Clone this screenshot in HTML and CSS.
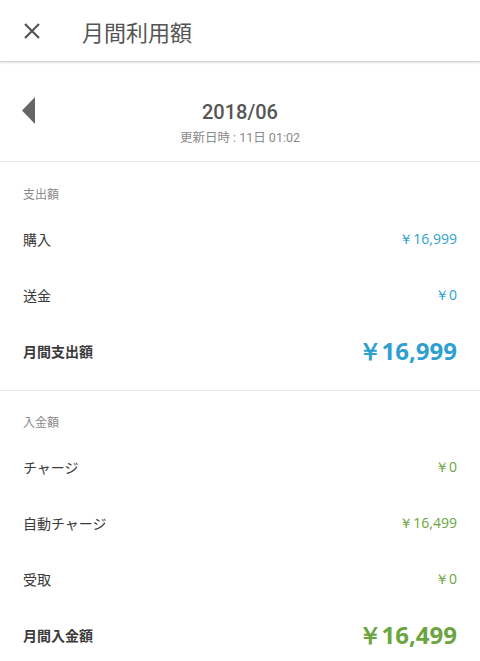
FILE: index.html
```html
<!DOCTYPE html>
<html lang="ja">
<head>
    <meta charset="UTF-8">
    <meta name="viewport" content="width=device-width, initial-scale=1.0">
    <title>月間利用額</title>
    <link rel="stylesheet" href="styles.css">
</head>
<body>
    <div class="header">
        <span class="close">
            <svg width="18" height="18" viewBox="0 0 18 18">
                <path d="M2 2 L16 16 M16 2 L2 16" stroke="#555" stroke-width="2.2" fill="none"/>
            </svg>
        </span>
        <span class="title">月間利用額</span>
    </div>

    <div class="month">
        <span class="prev">
            <svg width="14" height="27" viewBox="0 0 14 27">
                <polygon points="13,0 13,27 0,13.5" fill="#666"/>
            </svg>
        </span>
        <div class="month-text">
            <div class="month-name">2018/06</div>
            <div class="updated">更新日時 : 11日 01:02</div>
        </div>
    </div>

    <!-- 支出 -->
    <div class="section spend">
        <div class="section-label">支出額</div>
        <div class="row">
            <span class="label">購入</span>
            <span class="value">￥16,999</span>
        </div>
        <div class="row">
            <span class="label">送金</span>
            <span class="value">￥0</span>
        </div>
        <div class="row total">
            <span class="label">月間支出額</span>
            <span class="value">￥16,999</span>
        </div>
    </div>

    <!-- 入金 -->
    <div class="section income">
        <div class="section-label">入金額</div>
        <div class="row">
            <span class="label">チャージ</span>
            <span class="value">￥0</span>
        </div>
        <div class="row">
            <span class="label">自動チャージ</span>
            <span class="value">￥16,499</span>
        </div>
        <div class="row">
            <span class="label">受取</span>
            <span class="value">￥0</span>
        </div>
        <div class="row total">
            <span class="label">月間入金額</span>
            <span class="value">￥16,499</span>
        </div>
    </div>
</body>
</html>
```

FILE: styles.css
```css
body {
    margin: 0;
    padding: 0;
    font-family: Roboto, "Noto Sans CJK JP", sans-serif;
    background-color: #fff;
    color: #333;
    overflow: hidden;
}

.header {
    display: flex;
    align-items: center;
    height: 61px;
    border-bottom: 1px solid #d6d6d6;
    box-shadow: 0 1px 2px rgba(0,0,0,0.12);
}

.close {
    display: flex;
    width: 18px;
    height: 18px;
    margin-left: 23px;
}

.title {
    margin-left: 41px;
    font-size: 22px;
    color: #555;
    font-family: "Noto Sans CJK JP", sans-serif;
}

.month {
    position: relative;
    height: 99px;
    border-bottom: 1px solid #e6e6e6;
    display: flex;
    justify-content: center;
    align-items: flex-start;
}

/* 前月ボタン */
.prev {
    position: absolute;
    left: 22px;
    top: 35px;
    display: flex;
}

.month-text {
    text-align: center;
    padding-top: 37px;
}

.month-name {
    font-size: 20px;
    font-weight: 500;
    color: #555;
    line-height: 26px;
}

.updated {
    font-size: 12.5px;
    color: #8a8a8a;
    line-height: 18px;
    margin-top: 4px;
}

.section {
    padding: 0 23px;
}

.section.spend {
    border-bottom: 1px solid #e6e6e6;
    padding-bottom: 11px;
}

.section-label {
    font-family: "Noto Sans CJK JP", sans-serif;
    font-size: 12px;
    color: #8a8a8a;
    line-height: 20px;
    padding: 22px 0 7px;
}

.income .section-label {
    padding-top: 21px;
}

.row {
    display: flex;
    justify-content: space-between;
    align-items: center;
    height: 56px;
}

.label {
    font-family: "Noto Sans CJK JP", sans-serif;
    font-size: 14px;
    color: #3a3a3a;
}

.value {
    font-family: "Open Sans", sans-serif;
    font-size: 14px;
}

.spend .value {
    color: #2e9fcf;
}

.income .value {
    color: #6ba540;
}

.total .label {
    font-weight: bold;
}

.total .value {
    font-size: 24px;
    font-weight: bold;
}
```
